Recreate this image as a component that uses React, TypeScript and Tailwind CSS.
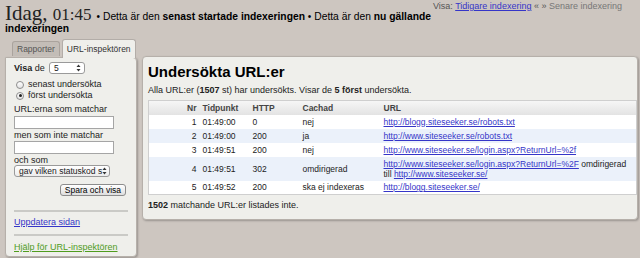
import React from "react";

const rows = [
  { nr: 1, time: "01:49:00", http: "0", cache: "nej", url: "http://blogg.siteseeker.se/robots.txt" },
  { nr: 2, time: "01:49:00", http: "200", cache: "ja", url: "http://www.siteseeker.se/robots.txt" },
  { nr: 3, time: "01:49:51", http: "200", cache: "nej", url: "http://www.siteseeker.se/login.aspx?ReturnUrl=%2f" },
  {
    nr: 4,
    time: "01:49:51",
    http: "302",
    cache: "omdirigerad",
    url: "http://www.siteseeker.se/login.aspx?ReturnUrl=%2F",
    to: "http://www.siteseeker.se/",
  },
  { nr: 5, time: "01:49:52", http: "200", cache: "ska ej indexeras", url: "http://blogg.siteseeker.se/" },
];

function Arrows() {
  return (
    <svg width="5" height="8" viewBox="0 0 5 8" className="shrink-0">
      <path d="M0.5 3 L2.5 0.5 L4.5 3 Z" fill="#333" />
      <path d="M0.5 5 L2.5 7.5 L4.5 5 Z" fill="#333" />
    </svg>
  );
}

function Radio({ checked, label }: { checked?: boolean; label: string }) {
  return (
    <label className="flex h-[11px] items-center gap-[4px] pl-[2px]">
      <span className="flex h-[8px] w-[8px] items-center justify-center rounded-full border border-[#8d8d8d] bg-gradient-to-b from-white to-[#e4e4e4]">
        {checked && <span className="h-[3px] w-[3px] rounded-full bg-[#222]" />}
      </span>
      <span>{label}</span>
    </label>
  );
}

export default function App() {
  return (
    <div className="relative h-[258px] w-[640px] overflow-hidden bg-[#cdc6c0] font-['Liberation_Sans',Arial,sans-serif] text-[#222]">
      {/* Header */}
      <div className="h-[39px] pl-[5px] text-[10.3px] leading-[11px] text-black">
        <div className="flex h-[22px] items-baseline gap-[5px] pt-[4px]">
          <h1 className="font-['Liberation_Serif',serif] text-[21px] font-normal leading-[18px] text-[#222]">
            Idag, <span className="text-[17px]">01:45</span>
          </h1>
          <p className="whitespace-nowrap">
            <span className="text-[10px]">•</span> Detta är den <b>senast startade indexeringen</b>{" "}
            <span className="text-[10px]">•</span> Detta är den <b>nu gällande</b>
          </p>
        </div>
        <p className="mt-[2px] font-bold leading-[10px]">indexeringen</p>
      </div>
      <div className="absolute left-[433px] top-[1px] whitespace-nowrap text-[9px] leading-[10px] text-[#555]">
        Visa: <a className="text-[#3535c8] underline">Tidigare indexering</a> « » <span className="text-[#777]">Senare indexering</span>
      </div>

      <div className="flex items-start pl-[5px]">
        {/* Left column */}
        <div className="w-[132px] shrink-0">
          <div className="flex items-end gap-[2px] whitespace-nowrap pl-[7px] text-[8.5px]">
            <div className="mb-[1px] flex h-[15px] items-center rounded-t-[3px] border border-b-0 border-[#aaa39d] bg-[#c3bdb7] px-[4px] text-[#555]">
              Rapporter
            </div>
            <div className="relative z-10 -mb-px flex h-[19px] items-center rounded-t-[3px] border border-b-0 border-[#b3ada8] bg-[#efefeb] px-[4px] text-[#333]">
              URL-inspektören
            </div>
          </div>
          <div className="flex h-[200px] flex-col rounded-b-[4px] rounded-tr-[4px] border border-[#b6b0aa] bg-[#efefeb] px-[8px] pt-[4px] text-[9px] leading-[11px] shadow-[1px_1px_2px_rgba(0,0,0,0.25)]">
            <div className="flex h-[12px] items-center gap-[4px]">
              <span>
                <b>Visa</b> de
              </span>
              <div className="flex h-[12px] w-[36px] items-center justify-between rounded-[3px] border border-[#9a9a9a] bg-white pl-[4px] pr-[3px] text-[8.5px]">
                5 <Arrows />
              </div>
            </div>
            <div className="mt-[5px]">
              <Radio label="senast undersökta" />
              <Radio checked label="först undersökta" />
            </div>
            <div className="mt-[3px] h-[11px]">URL:erna som matchar</div>
            <div className="mt-[1px] h-[13px] w-[100px] border border-[#a5a5a5] bg-white" />
            <div className="mt-[1px] h-[11px]">men som inte matchar</div>
            <div className="h-[13px] w-[100px] border border-[#a5a5a5] bg-white" />
            <div className="mt-[1px] h-[10px] leading-[10px]">och som</div>
            <div className="flex h-[12px] w-[96px] items-center justify-between rounded-[3px] border border-[#9a9a9a] bg-gradient-to-b from-white to-[#ececec] pl-[4px] pr-[3px] text-[8.5px]">
              <span className="whitespace-nowrap">gav vilken statuskod s</span>
              <Arrows />
            </div>
            <div className="mt-[7px] flex justify-end pr-[2px]">
              <button className="h-[12px] rounded-[3px] border border-[#8c8c8c] bg-gradient-to-b from-white to-[#dedede] px-[4px] text-[8.5px] leading-[10px] text-black">
                Spara och visa
              </button>
            </div>
            <div className="mt-[14px] h-[2px] bg-[#cacac6]" />
            <a className="mt-[5px] h-[11px] text-[#3535c8] underline">Uppdatera sidan</a>
            <div className="mt-[6px] h-[2px] bg-[#cacac6]" />
            <a className="mt-[6px] h-[11px] text-[#4f9c1e] underline">Hjälp för URL-inspektören</a>
          </div>
        </div>

        {/* Main panel */}
        <div className="ml-[5px] mt-[17px] w-[496px] shrink-0 rounded-[4px] border border-[#b6b0aa] bg-[#efefeb] pb-[9px] pl-[5px] pr-[1px] pt-[6px] shadow-[1px_1px_2px_rgba(0,0,0,0.25)]">
          <h2 className="text-[15px] font-bold leading-[18px] text-black">Undersökta URL:er</h2>
          <p className="mt-[4px] text-[9px] leading-[10px]">
            Alla URL:er (<b>1507</b> st) har undersökts. Visar de <b>5</b> <b>först</b> undersökta.
          </p>
          <table className="mt-[5px] w-[489px] table-fixed border-collapse border border-[#cfcfcf] text-[8.5px] leading-[10px]">
            <colgroup>
              <col className="w-[51px]" />
              <col className="w-[50px]" />
              <col className="w-[50px]" />
              <col className="w-[81px]" />
              <col />
            </colgroup>
            <thead>
              <tr className="h-[14px] bg-gradient-to-b from-[#f6f6f6] to-[#e3e3e3] text-left text-[#444]">
                <th className="pr-[3px] text-right font-bold">Nr</th>
                <th className="pl-[3px] font-bold">Tidpunkt</th>
                <th className="pl-[3px] font-bold">HTTP</th>
                <th className="pl-[3px] font-bold">Cachad</th>
                <th className="pl-[3px] font-bold">URL</th>
              </tr>
            </thead>
            <tbody>
              {rows.map((r) => (
                <tr key={r.nr} className={r.nr % 2 === 0 ? "bg-[#ebf1fa]" : "bg-white"}>
                  <td className={`pr-[3px] text-right ${r.to ? "h-[24px]" : "h-[14px]"}`}>{r.nr}</td>
                  <td className="pl-[3px]">{r.time}</td>
                  <td className="pl-[3px]">{r.http}</td>
                  <td className="pl-[3px]">{r.cache}</td>
                  <td className="pl-[3px] whitespace-nowrap">
                    <a className="text-[#3535c8] underline">{r.url}</a>
                    {r.to && (
                      <>
                        {" "}omdirigerad
                        <br />
                        till <a className="text-[#3535c8] underline">{r.to}</a>
                      </>
                    )}
                  </td>
                </tr>
              ))}
            </tbody>
          </table>
          <p className="mt-[5px] text-[9px] leading-[10px]">
            <b>1502</b> matchande URL:er listades inte.
          </p>
        </div>
      </div>
    </div>
  );
}
